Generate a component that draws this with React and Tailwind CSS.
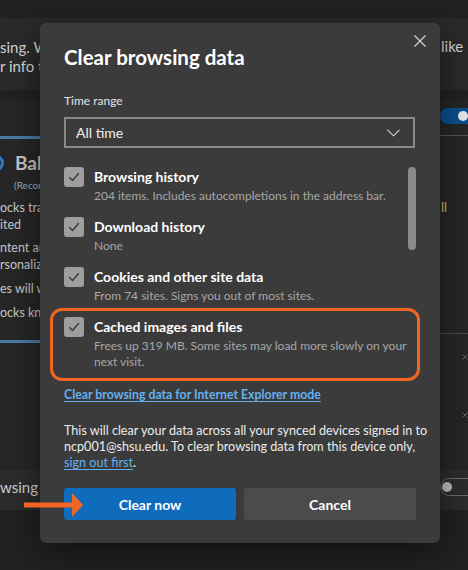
import React from "react";

function Check() {
  return (
    <div className="w-5 h-5 shrink-0 rounded-[3px] bg-[#9e9e9e] flex items-center justify-center">
      <svg width="14" height="14" viewBox="0 0 14 14" fill="none">
        <path d="M2.5 7.5 L5.5 10.5 L11.5 3.5" stroke="#3a3a3a" strokeWidth="1.4" strokeLinecap="round" strokeLinejoin="round" />
      </svg>
    </div>
  );
}

function Item({ title, desc, children }) {
  return (
    <div className="relative flex gap-[10px]">
      <Check />
      <div className="flex flex-col pr-[8px]">
        <div className="text-[14px] leading-5 font-bold text-white">{title}</div>
        <div className="text-[12px] leading-4 pt-px text-[#a7a7a7]">{desc}</div>
      </div>
      {children}
    </div>
  );
}

export default function App() {
  return (
    <div
      className="relative w-[468px] h-[570px] overflow-hidden bg-[#212121] flex flex-col"
      style={{ fontFamily: "Lato, 'Noto Sans', sans-serif" }}
    >
      {/* background page */}
      <div className="h-[18px] shrink-0" />
      <div className="h-[72px] shrink-0 bg-[#2a2a2a] flex">
        <div className="w-[40px] overflow-hidden pt-[20px] text-[15px] leading-[19px] text-[#d4d4d4] whitespace-nowrap">
          <div>sing. We</div>
          <div>r info to</div>
        </div>
        <div className="ml-auto w-[28px] overflow-hidden pt-[19px] pl-px text-[15px] leading-[19px] text-[#d4d4d4] whitespace-nowrap">
          like
        </div>
      </div>
      <div className="h-[10px] shrink-0" />
      <div className="h-[410px] shrink-0 bg-[#262626] flex">
        <div className="w-[40px] overflow-hidden flex flex-col whitespace-nowrap">
          <div className="mt-[36px] h-[3px] w-[40px] bg-[#4a7aa3]" />
          <div className="mt-[12px] flex items-center h-6">
            <div className="-ml-[12px] w-[16px] h-[16px] shrink-0 rounded-full border-[3px] border-[#2f78c4]" />
            <span className="ml-[11px] text-[19px] font-bold text-[#c4c4c4]">Bal</span>
          </div>
          <div className="mt-[4px] pl-[14px] text-[10px] leading-3 text-[#9eaec0]">(Recom</div>
          <div className="mt-[7.5px] text-[12.5px] leading-[17px] text-[#c8c8c8]">
            <div>ocks trac</div>
            <div>ited</div>
          </div>
          <div className="mt-[6px] text-[12.5px] leading-[17px] text-[#c8c8c8]">
            <div>ntent ar</div>
            <div>rsonaliz</div>
          </div>
          <div className="mt-[7px] text-[12.5px] leading-[17px] text-[#c8c8c8]">es will w</div>
          <div className="mt-[7px] text-[12.5px] leading-[17px] text-[#c8c8c8]">ocks kno</div>
          <div className="mt-[19.5px] h-[3px] w-[40px] bg-[#4a7aa3]" />
          <div className="mt-auto h-[40px] bg-[#2c2c2c] pt-[8px] text-[15px] leading-[19px] text-[#cfcfcf]">wsing I</div>
        </div>
        <div className="ml-auto w-[28px] overflow-hidden flex flex-col">
          <div className="mt-[8px] h-[16px] w-[40px] rounded-l-full bg-[#0b4f8e] flex items-center">
            <div className="ml-[18px] w-[10px] h-[10px] rounded-full bg-[#e8e8e8]" />
          </div>
          <div className="mt-[11px] h-px bg-[#555555]" />
          <div className="mt-[63px] pl-px text-[13px] leading-[17px] text-[#d0c060]">ll</div>
          <div className="mt-[117px] h-px bg-[#4a4a4a]" />
          <div className="mt-[18px] pl-[22px] h-[10px] flex">
            <svg width="12" height="12" viewBox="0 0 12 12" className="-mt-px"><path d="M1 1 L11 11 M11 1 L1 11" stroke="#8a8a8a" strokeWidth="1.2" /></svg>
          </div>
          <div className="mt-[48px] pl-[22px] h-[10px] flex">
            <svg width="12" height="12" viewBox="0 0 12 12" className="-mt-px"><path d="M1 1 L11 11 M11 1 L1 11" stroke="#8a8a8a" strokeWidth="1.2" /></svg>
          </div>
          <div className="mt-auto h-[40px] bg-[#2c2c2c] pt-[8px]">
            <div className="h-[18px] w-[40px] rounded-l-full border border-[#6a6a6a] flex items-center">
              <div className="ml-[1px] w-[10px] h-[10px] rounded-full bg-[#bdbdbd]" />
            </div>
          </div>
        </div>
      </div>

      {/* dialog */}
      <div className="absolute left-[40px] top-[23px] w-[400px] h-[520px] rounded-[6px] bg-[#3b3b3b] shadow-[0_8px_32px_rgba(0,0,0,0.5)] px-[24px] pt-[20px] flex flex-col">
        <button className="absolute top-[12px] right-[14px] w-[12px] h-[12px]">
          <svg width="12" height="12" viewBox="0 0 12 12"><path d="M0.5 0.5 L11.5 11.5 M11.5 0.5 L0.5 11.5" stroke="#dcdcdc" strokeWidth="1.1" /></svg>
        </button>
        <h1 className="text-[20.5px] leading-[28px] font-bold text-white">Clear browsing data</h1>
        <div className="mt-[21px] text-[12px] leading-[18px] text-[#e4e4e4]">Time range</div>
        <div className="mt-[7px] h-[31px] w-[351px] border-2 border-[#8a8a8a] flex items-center justify-between pl-[10px] pr-[13px]">
          <span className="text-[14px] text-[#f0f0f0]">All time</span>
          <svg width="13" height="8" viewBox="0 0 13 8"><path d="M0.5 0.8 L6.5 6.8 L12.5 0.8" stroke="#d8d8d8" strokeWidth="1.1" fill="none" /></svg>
        </div>
        <div className="relative mt-[19px] flex flex-col gap-[13px]">
          <div className="absolute right-0 top-0 w-[8px] h-[83px] rounded-full bg-[#8b8b8b]" />
          <Item title="Browsing history" desc="204 items. Includes autocompletions in the address bar." />
          <Item title="Download history" desc="None" />
          <Item title="Cookies and other site data" desc="From 74 sites. Signs you out of most sites." />
          <Item title="Cached images and files" desc="Frees up 319 MB. Some sites may load more slowly on your next visit.">
            <div className="absolute -left-[14px] -top-[9px] w-[370px] h-[73px] rounded-[12px] border-[3px] border-[#f26522] pointer-events-none" />
          </Item>
        </div>
        <a className="mt-[17px] text-[12.3px] leading-4 font-bold text-[#62b0f0] underline underline-offset-2 whitespace-nowrap">
          Clear browsing data for Internet Explorer mode
        </a>
        <p className="mt-[20px] text-[12.6px] leading-4 text-[#ececec] whitespace-nowrap">
          This will clear your data across all your synced devices signed in to
          <br />
          ncp001@shsu.edu. To clear browsing data from this device only,
          <br />
          <a className="text-[#62b0f0] underline underline-offset-2">sign out first</a>.
        </p>
        <div className="mt-[17px] flex gap-[8px]">
          <button className="w-[172px] h-[32px] rounded-[3px] bg-[#0f6cbd] text-white text-[14px] font-bold">Clear now</button>
          <button className="w-[172px] h-[32px] rounded-[3px] bg-[#4b4b4b] text-white text-[14px] font-bold">Cancel</button>
        </div>
      </div>

      {/* annotation arrow */}
      <svg className="absolute left-[24px] top-[493px]" width="60" height="25" viewBox="0 0 60 25">
        <rect x="0" y="9.5" width="49" height="5" fill="#f26522" />
        <polygon points="48,0 59,12 48,24" fill="#f26522" />
      </svg>
    </div>
  );
}
